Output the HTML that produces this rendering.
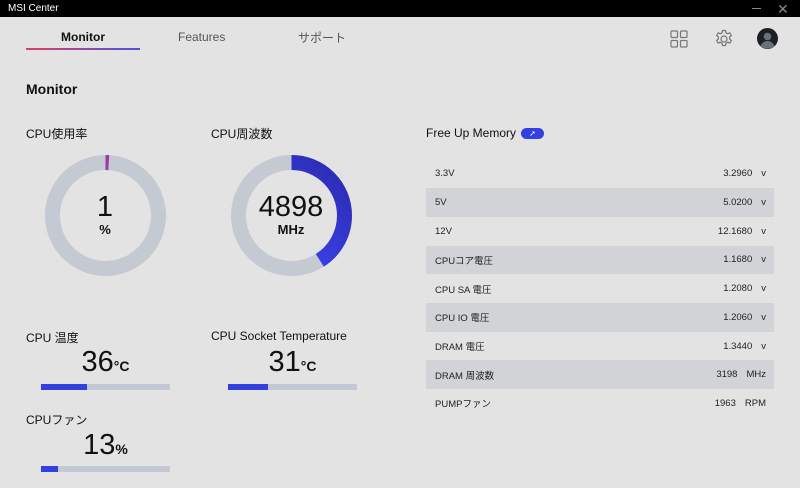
<!DOCTYPE html><html><head><meta charset="utf-8"><style>
*{margin:0;padding:0;box-sizing:border-box}
body{width:800px;height:488px;background:#e3e3e3;font-family:"Liberation Sans","Noto Sans CJK JP",sans-serif;color:#111;position:relative;overflow:hidden}
.a{position:absolute}
.title{left:0;top:0;width:800px;height:17px;background:#000;color:#fff;font-size:10px;line-height:17px;padding-left:8px}
.lbl{font-size:12px;color:#111}
.row{position:absolute;left:426px;width:348px;height:28.7px;display:flex;align-items:center;font-size:9.5px;color:#222;padding-left:9px;padding-right:8px}
.row.g{background:#d2d3d7}
.row .n{flex:1}
.row .u{margin-left:9px}
.bar{position:absolute;height:6px;background:#c3c8d2}
.bar i{position:absolute;left:0;top:0;height:6px;background:#3340e0}
.big{font-size:29px;text-align:center}
.big small{font-size:14px;font-weight:bold}
</style></head><body>
<div class="a title">MSI Center</div>
<div class="a" style="left:752px;top:8px;width:9px;height:1px;background:#888"></div>
<div class="a" style="left:777px;top:1px;color:#888;font-size:14px">✕</div>
<div class="a" style="left:61px;top:30px;font-size:12px;font-weight:bold">Monitor</div>
<div class="a" style="left:178px;top:30px;font-size:12px;color:#555">Features</div>
<div class="a" style="left:298px;top:29px;font-size:12px;color:#555">サポート</div>
<div class="a" style="left:26px;top:48px;width:114px;height:2px;background:linear-gradient(90deg,#e04060,#5050e0)"></div>
<svg class="a" style="left:670px;top:30px" width="18" height="18" fill="none" stroke="#777" stroke-width="1.2"><rect x="1" y="1" width="6.5" height="6.5" rx="1"/><rect x="10.5" y="1" width="6.5" height="6.5" rx="1"/><rect x="1" y="10.5" width="6.5" height="6.5" rx="1"/><rect x="10.5" y="10.5" width="6.5" height="6.5" rx="1"/></svg>
<svg class="a" style="left:714px;top:29px" width="20" height="20" viewBox="0 0 20 20" fill="none" stroke="#777" stroke-width="1.2"><path d="M8.5 1.5h3l.5 2.3 1.6.9 2.2-.8 1.5 2.6-1.7 1.6v1.8l1.7 1.6-1.5 2.6-2.2-.8-1.6.9-.5 2.3h-3l-.5-2.3-1.6-.9-2.2.8-1.5-2.6 1.7-1.6V8.1L2.7 6.5l1.5-2.6 2.2.8 1.6-.9z"/><circle cx="10" cy="10" r="3"/></svg>
<svg class="a" style="left:757px;top:28px" width="21" height="21" viewBox="0 0 21 21"><circle cx="10.5" cy="10.5" r="10.5" fill="#1c1f26"/><circle cx="10.5" cy="8.5" r="3.8" fill="#6a6f78"/><path d="M3.5 18c1.5-3.5 4-5 7-5s5.5 1.5 7 5a10.5 10.5 0 0 1-14 0z" fill="#6a6f78"/></svg>
<div class="a" style="left:26px;top:81px;font-size:14px;font-weight:bold">Monitor</div>
<div class="a lbl" style="left:26px;top:125px">CPU使用率</div>
<div class="a lbl" style="left:211px;top:125px">CPU周波数</div>
<svg class="a" style="left:0;top:0" width="400" height="300">
<defs><linearGradient id="g" x1="0" y1="0" x2="1" y2="1"><stop offset="0" stop-color="#9a3aa8"/><stop offset=".35" stop-color="#3b40e6"/><stop offset="1" stop-color="#2a2ab0"/></linearGradient></defs>
<circle cx="105.5" cy="215.5" r="53" fill="none" stroke="#c5c9d2" stroke-width="15"/>
<circle cx="105.5" cy="215.5" r="53" fill="none" stroke="#993aa8" stroke-width="15" stroke-dasharray="3.3 400" transform="rotate(-90 105.5 215.5)"/>
<circle cx="291.5" cy="215.5" r="53" fill="none" stroke="#c5c9d2" stroke-width="15"/>
<circle cx="291.5" cy="215.5" r="53" fill="none" stroke="url(#g)" stroke-width="15" stroke-dasharray="136.5 400" transform="rotate(-90 291.5 215.5)"/>
</svg>
<div class="a" style="left:65px;top:192px;width:80px;text-align:center;font-size:29px;line-height:30px">1</div>
<div class="a" style="left:65px;top:222px;width:80px;text-align:center;font-size:13px;font-weight:bold">%</div>
<div class="a" style="left:241px;top:192px;width:100px;text-align:center;font-size:29px;line-height:30px">4898</div>
<div class="a" style="left:241px;top:222px;width:100px;text-align:center;font-size:13px;font-weight:bold">MHz</div>
<div class="a lbl" style="left:26px;top:329px">CPU 温度</div>
<div class="a lbl" style="left:211px;top:329px">CPU Socket Temperature</div>
<div class="a lbl" style="left:26px;top:411px">CPUファン</div>
<div class="a big" style="left:41px;top:346px;width:129px">36<small>°C</small></div>
<div class="a big" style="left:228px;top:346px;width:129px">31<small>°C</small></div>
<div class="a big" style="left:41px;top:429px;width:129px">13<small>%</small></div>
<div class="bar" style="left:41px;top:384px;width:129px"><i style="width:46px"></i></div>
<div class="bar" style="left:228px;top:384px;width:129px"><i style="width:40px"></i></div>
<div class="bar" style="left:41px;top:466px;width:129px"><i style="width:17px"></i></div>
<div class="a" style="left:426px;top:126px;font-size:12px">Free Up Memory</div>
<div class="a" style="left:521px;top:128px;width:23px;height:11px;border-radius:6px;background:#3340e0;color:#fff;font-size:8px;line-height:11px;text-align:center">➚</div>
<div class="row" style="top:159.5px"><span class="n">3.3V</span><span>3.2960</span><span class="u">v</span></div>
<div class="row g" style="top:188.2px"><span class="n">5V</span><span>5.0200</span><span class="u">v</span></div>
<div class="row" style="top:216.9px"><span class="n">12V</span><span>12.1680</span><span class="u">v</span></div>
<div class="row g" style="top:245.6px"><span class="n">CPUコア電圧</span><span>1.1680</span><span class="u">v</span></div>
<div class="row" style="top:274.3px"><span class="n">CPU SA 電圧</span><span>1.2080</span><span class="u">v</span></div>
<div class="row g" style="top:303px"><span class="n">CPU IO 電圧</span><span>1.2060</span><span class="u">v</span></div>
<div class="row" style="top:331.7px"><span class="n">DRAM 電圧</span><span>1.3440</span><span class="u">v</span></div>
<div class="row g" style="top:360.4px"><span class="n">DRAM 周波数</span><span>3198</span><span class="u">MHz</span></div>
<div class="row" style="top:389.1px"><span class="n">PUMPファン</span><span>1963</span><span class="u">RPM</span></div>
</body></html>
